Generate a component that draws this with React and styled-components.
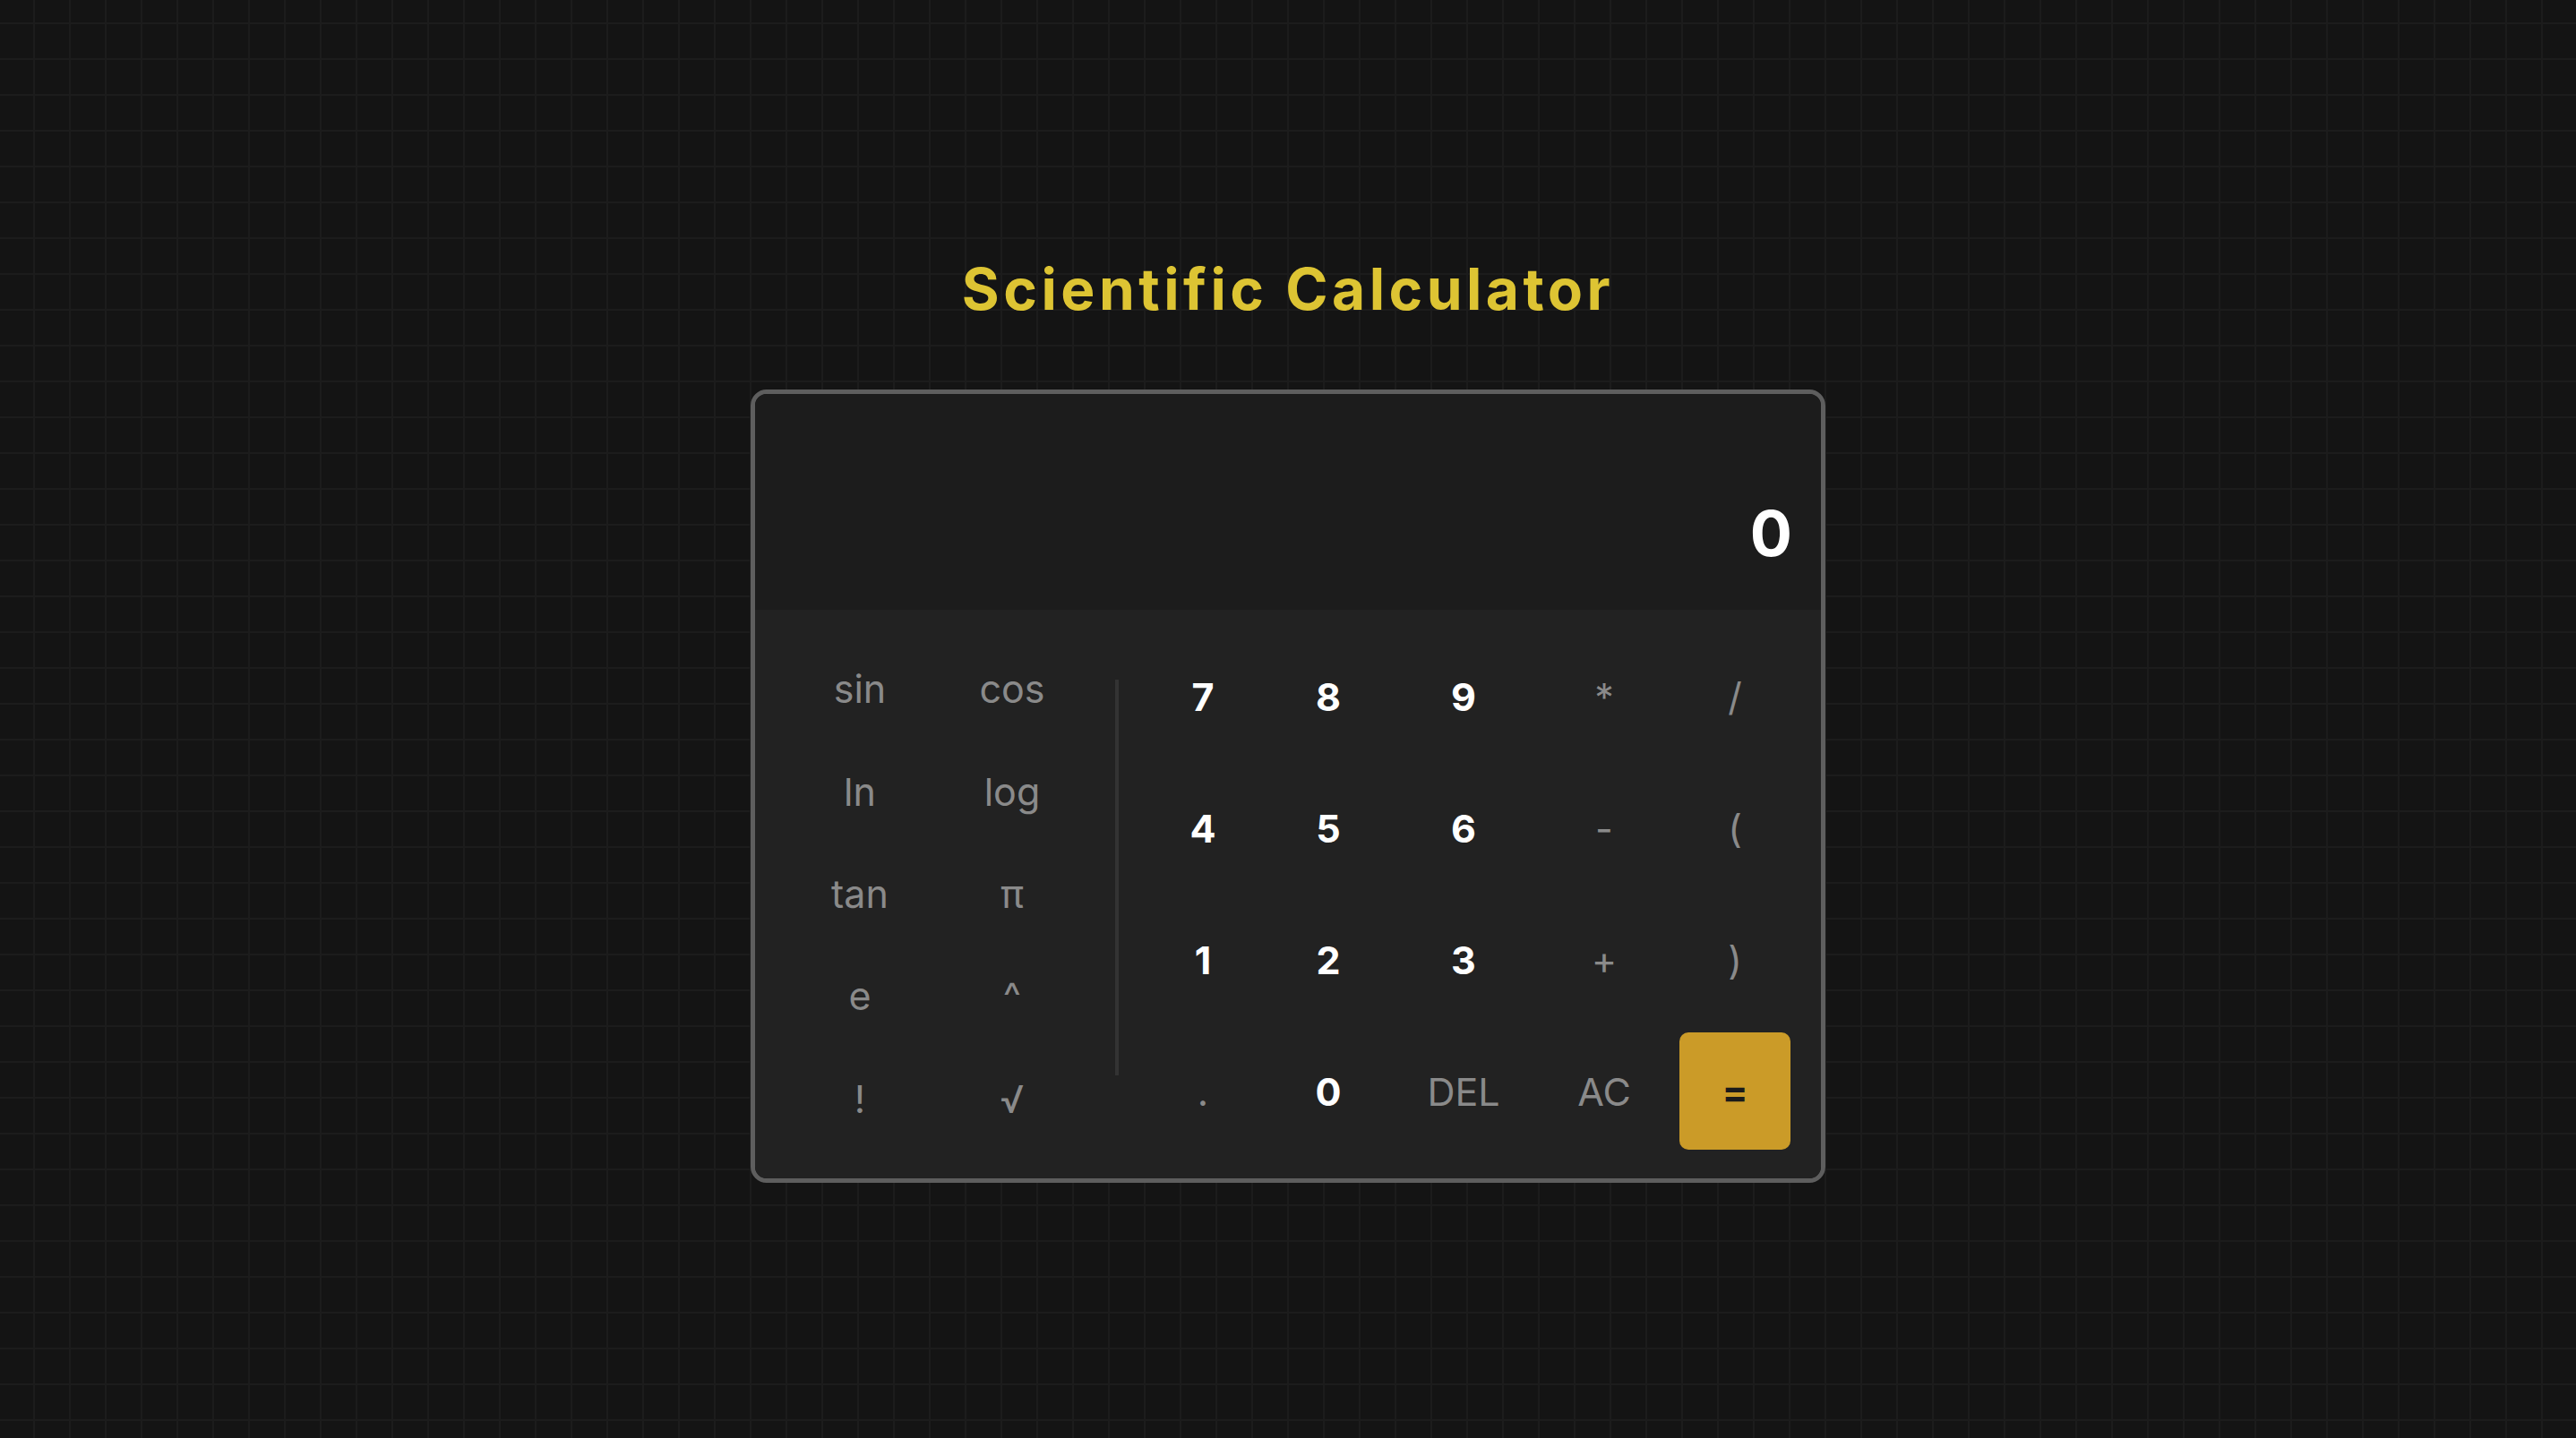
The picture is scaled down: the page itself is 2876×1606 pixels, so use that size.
import styled, { createGlobalStyle } from 'styled-components';

const GlobalStyle = createGlobalStyle`
  body {
    margin: 0;
    background: #141414;
    font-family: Inter, "Noto Sans", sans-serif;
  }
`;

const Page = styled.main`
  min-height: 100vh;
  box-sizing: border-box;
  padding-top: 284px;
  display: flex;
  flex-direction: column;
  align-items: center;
  background-color: #141414;
  background-image: linear-gradient(to right, #1c1c1c 2px, transparent 2px),
    linear-gradient(to bottom, #1c1c1c 2px, transparent 2px);
  background-size: 40px 40px;
  background-position: 37px 25px;
`;

const Title = styled.h1`
  margin: 0 0 74px;
  font-size: 64px;
  font-weight: 700;
  line-height: normal;
  letter-spacing: 4.5px;
  color: #ddc433;
`;

const Calculator = styled.div`
  width: 1200px;
  box-sizing: border-box;
  border: 5px solid #5e5e5e;
  border-radius: 18px;
  overflow: hidden;
`;

const Display = styled.div`
  height: 241px;
  box-sizing: border-box;
  padding: 0 32px 43px;
  display: flex;
  align-items: flex-end;
  justify-content: flex-end;
  background: #1c1c1c;
  color: #fff;
  font-size: 70px;
  font-weight: 700;
`;

const Keypad = styled.div`
  display: flex;
  padding: 31px 32px 32px;
  background: #222;
`;

const Functions = styled.div`
  display: grid;
  grid-template-columns: repeat(2, 170px);
  grid-template-rows: repeat(5, 1fr);
`;

const Divider = styled.div`
  width: 4px;
  height: 442px;
  margin: 47px 32px 0 30px;
  background: #333;
`;

const Numbers = styled.div`
  display: grid;
  grid-template-columns: 124px 124px 146px 136px 124px;
  grid-template-rows: repeat(4, 131px);
  gap: 16px;
`;

const colors = {
  fn: '#8a8a8a',
  op: '#8a8a8a',
  num: '#ffffff',
  equals: '#1a1a1a',
};

const Key = styled.button`
  display: flex;
  align-items: center;
  justify-content: center;
  padding: 0;
  border: none;
  border-radius: 10px;
  background: ${({ $variant }) => ($variant === 'equals' ? '#cb9b28' : 'transparent')};
  color: ${({ $variant }) => colors[$variant]};
  font-family: inherit;
  font-size: 43px;
  font-weight: ${({ $variant }) => ($variant === 'num' || $variant === 'equals' ? 700 : 400)};
  cursor: pointer;
`;

const functionKeys = ['sin', 'cos', 'ln', 'log', 'tan', 'π', 'e', '^', '!', '√'];

const numberKeys = [
  ['7', 'num'], ['8', 'num'], ['9', 'num'], ['*', 'op'], ['/', 'op'],
  ['4', 'num'], ['5', 'num'], ['6', 'num'], ['-', 'op'], ['(', 'op'],
  ['1', 'num'], ['2', 'num'], ['3', 'num'], ['+', 'op'], [')', 'op'],
  ['.', 'op'], ['0', 'num'], ['DEL', 'op'], ['AC', 'op'], ['=', 'equals'],
];

export default function App() {
  return (
    <Page>
      <GlobalStyle />
      <Title>Scientific Calculator</Title>
      <Calculator>
        <Display>0</Display>
        <Keypad>
          <Functions>
            {functionKeys.map((label) => (
              <Key key={label} $variant="fn">
                {label}
              </Key>
            ))}
          </Functions>
          <Divider />
          <Numbers>
            {numberKeys.map(([label, variant]) => (
              <Key key={label} $variant={variant}>
                {label}
              </Key>
            ))}
          </Numbers>
        </Keypad>
      </Calculator>
    </Page>
  );
}
